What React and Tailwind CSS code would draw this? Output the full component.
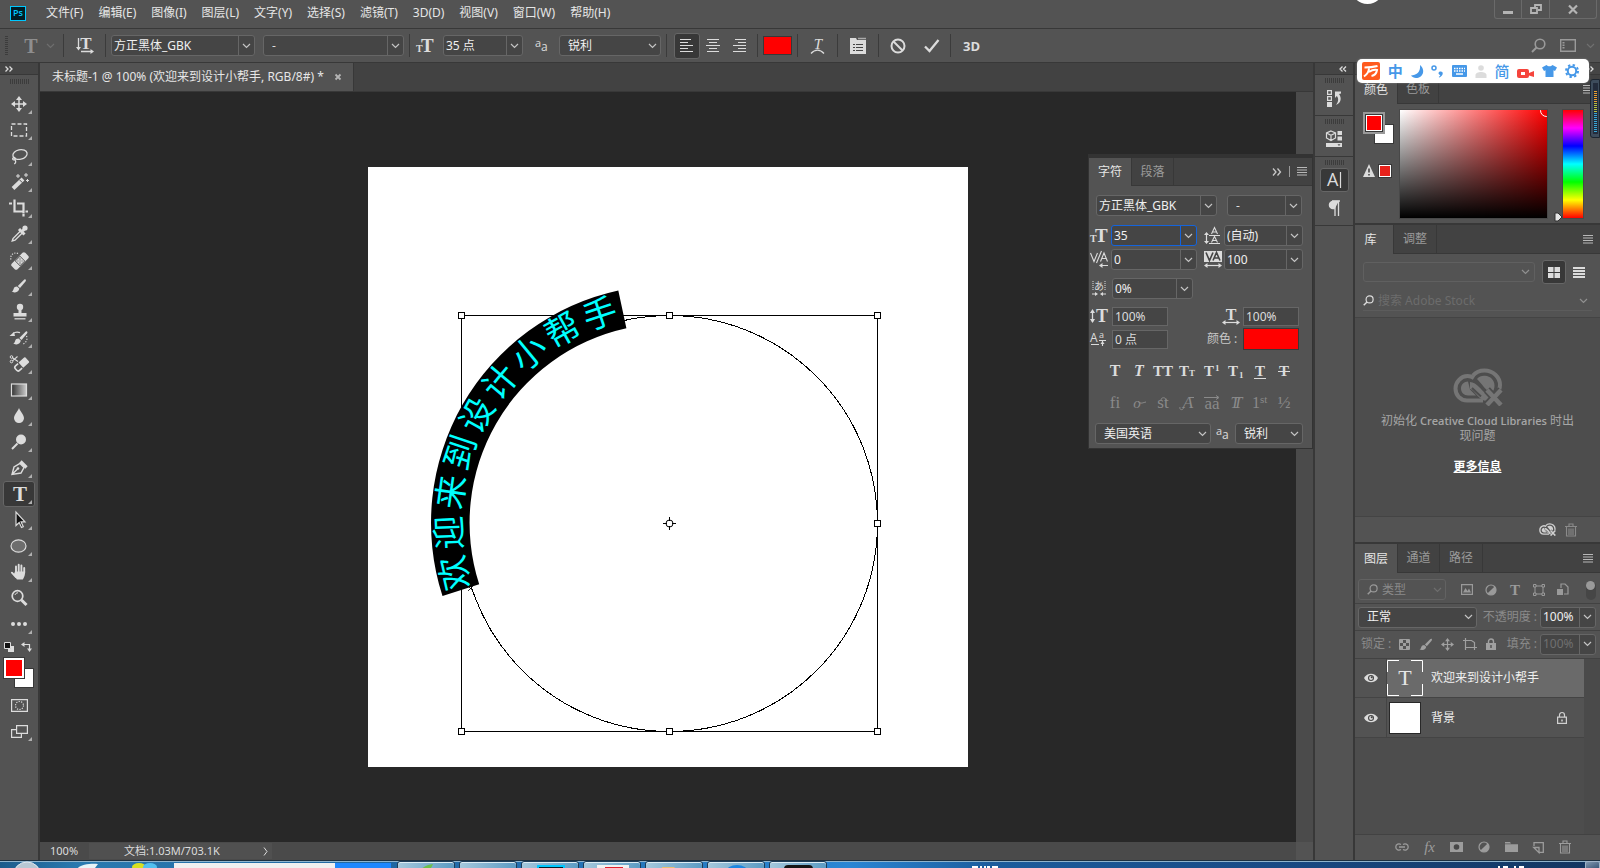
import React from "react";

/* ---------- small helpers ---------- */

const Svg = ({ w = 24, h = 24, className = "", children }) => (
  <svg
    width={w}
    height={h}
    viewBox={`0 0 ${w} ${h}`}
    className={`shrink-0 overflow-visible ${className}`}
    fill="none"
    stroke="currentColor"
    strokeWidth="1.5"
    aria-hidden="true"
  >
    {children}
  </svg>
);

const Chevron = ({ className = "" }) => (
  <Svg w={9} h={6} className={className}>
    <path d="M1 1l3.500 3.500L8 1" strokeWidth="1.200" />
  </Svg>
);

const Glyph = ({ x, y, size, children, italic, weight = 700, anchor = "start", sans }) => (
  <text
    x={x}
    y={y}
    fontSize={size}
    fontWeight={weight}
    fontStyle={italic ? "italic" : "normal"}
    textAnchor={anchor}
    fill="currentColor"
    stroke="none"
    fontFamily={sans ? "'Open Sans', 'Noto Sans', sans-serif" : "'Liberation Serif', serif"}
  >
    {children}
  </text>
);

const Grip = () => (
  <div className="flex h-[5px] justify-center gap-[1px]">
    {Array.from({ length: 10 }, (_, i) => (
      <span key={i} className="w-px bg-[#3c3c3c]" />
    ))}
  </div>
);

const Sep = ({ className = "" }) => <span className={`h-[23px] w-px shrink-0 bg-[#3b3b3b] ${className}`} />;

function Select({ label, value, className = "", textClass = "pl-2", divider, chevron = "text-[#c4c4c4]" }) {
  return (
    <span className={`relative flex h-[21px] shrink-0 rounded-[3px] border border-[#666] bg-[#454545] ${className}`}>
      <select aria-label={label} className={`w-full appearance-none bg-transparent pr-4 leading-4 outline-none ${textClass}`}>
        <option>{value}</option>
      </select>
      <span
        className={`pointer-events-none absolute inset-y-0 right-0 flex w-[16px] items-center justify-center ${divider ? "border-l border-[#666]" : ""}`}
      >
        <Chevron className={chevron} />
      </span>
    </span>
  );
}

function Combo({ label, value, className = "", border = "border-[#666]", text = "text-[#f0f0f0]" }) {
  return (
    <span className={`flex h-[21px] shrink-0 rounded-[3px] border bg-[#454545] ${border} ${className}`}>
      <input aria-label={label} defaultValue={value} className={`w-0 grow bg-transparent pl-[2px] leading-4 outline-none ${text}`} />
      <button type="button" aria-label={`${label} ▾`} className={`flex w-[16px] items-center justify-center border-l text-[#c4c4c4] ${border}`}>
        <Chevron />
      </button>
    </span>
  );
}

const Plain = ({ label, value }) => (
  <input aria-label={label} defaultValue={value} className="h-[19px] w-[56px] border border-[#666] bg-[#454545] pl-[2px] leading-4 outline-none" />
);

const Burger = () => (
  <button type="button" aria-label="面板菜单" className="text-[#b8b8b8]">
    <Svg w={10} h={9}>
      <path d="M0 .5h10M0 3h10M0 5.500h10M0 8h10" strokeWidth="1" />
    </Svg>
  </button>
);

/* ---------- icons ---------- */

const IconAA = () => (
  <Svg w={14} h={14}>
    <Glyph x="0" y="8" size="11" weight="400" sans>a</Glyph>
    <Glyph x="6" y="12" size="12" weight="400" sans>a</Glyph>
  </Svg>
);

const IconSize = () => (
  <Svg w={18} h={16}>
    <Glyph x="0" y="14" size="10">T</Glyph>
    <Glyph x="5" y="14" size="19">T</Glyph>
  </Svg>
);

const IconSearch = ({ s = 15 }) => (
  <svg width={s} height={s} viewBox="0 0 15 15" fill="none" stroke="currentColor" strokeWidth="1.600" className="shrink-0" aria-hidden="true">
    <circle cx="9" cy="6" r="4.800" />
    <path d="M5.500 9.500L1 14" strokeWidth="2" />
  </svg>
);

const IconCC = ({ w, h, hole }) => (
  <svg width={w} height={h} viewBox="0 0 50 38" fill="none" stroke="currentColor" className="shrink-0" aria-hidden="true">
    <path d="M30 32.500H14C7 32.500 2.500 27 2.500 20.500S8 8 14.500 8c2.500 0 4.500.6 6.500 2" strokeWidth="4" />
    <path d="M20 7.500C22.500 4.500 27 2.500 31.500 2.500 40 2.500 47 9 47 17c0 2-.5 3.500-1 5" strokeWidth="4" />
    <path d="M17 17.500c5 0 6.500 5 13 10.500 2 1.500 4.500 2 7 1" strokeWidth="7" />
    <path d="M15 13.500c-4 0-7 3.200-7 7s3 7 7 7h8l-6-6z" fill="currentColor" stroke="none" />
    <path d="M24 11c2-2.500 5-3.500 8-3.200 5.500.3 9.500 4.500 9.500 9.700 0 3-1 5.500-3 7.500C33 23 29 16 24 11z" fill="currentColor" stroke="none" />
    <path d="M19 20l9 8.500" stroke={hole} strokeWidth="2" />
    <path d="M34 22l14 15M48 22L34 37" stroke={hole} strokeWidth="8" />
    <path d="M34 22l14 15M48 22L34 37" strokeWidth="4.500" />
  </svg>
);

const IconTrash = () => (
  <Svg w={12} h={14}>
    <path d="M0 3.500h12M4 3V1h4v2M1.500 4v9h9V4M4 5.500V12M6 5.500V12M8 5.500V12" strokeWidth="1.100" />
  </Svg>
);

const Eye = () => (
  <Svg w={14} h={10}>
    <path d="M0 5C3-.8 11-.8 14 5c-3 5.800-11 5.800-14 0z" fill="currentColor" stroke="none" />
    <circle cx="7" cy="5" r="3" fill="#444" stroke="none" />
    <circle cx="7" cy="5" r="1.900" fill="#ddd" stroke="none" />
    <circle cx="7.700" cy="4.300" r="1" fill="#444" stroke="none" />
  </Svg>
);

const IconHalf = () => (
  <Svg w={12} h={12}>
    <circle cx="6" cy="6" r="5" strokeWidth="1.200" />
    <path d="M9.600 2.400A5 5 0 0 1 2.400 9.600z" fill="currentColor" stroke="none" />
  </Svg>
);

const brushHead = "M18.500 5.500c.8.6.4 1.500 0 2.100L13 14l-2.200-2 6-6c.5-.5 1.100-.9 1.700-.5z";
const brushTip = "M10 12.600l2.300 2c-.2 2.200-2 3.700-4.300 3.800-1.300.1-2.600-.2-3.400-.8 1.500-.5 1.600-1.500 2-2.700.5-1.500 1.700-2.300 3.400-2.300z";
const arrowHeads = "M12 4l3 4H9zM12 20l3-4H9zM4 12l4-3v6zM20 12l-4-3v6z";

const toolIcons = {
  移动工具: (
    <>
      <path d="M12 7v10M7 12h10" />
      <path d={arrowHeads} fill="currentColor" stroke="none" />
    </>
  ),
  矩形选框工具: <rect x="4.500" y="6" width="15" height="12" strokeDasharray="4 2" strokeWidth="1.300" />,
  套索工具: (
    <>
      <ellipse cx="13" cy="10.500" rx="7.200" ry="4.800" transform="rotate(-12 13 10.500)" strokeWidth="1.300" />
      <path d="M7.500 13.500c-2 0-2.500 2 -.8 2.300 1.800.2 2.200-1.500.8-2.300zm.5 2.500c1.200 1.200.8 3-.7 4" strokeWidth="1.300" />
    </>
  ),
  魔棒工具: (
    <>
      <path d="M6 18.500L16 9" strokeWidth="4" />
      <path d="M12.500 9.800l3 3" stroke="#535353" strokeWidth="1" />
      <path d="M11 4v4M9 6h4M19 3v4M17 5h4M20.500 9v3M19 10.500h3" strokeWidth="1" />
    </>
  ),
  裁剪工具: <path d="M2 7.500h3M7.500 3.500v12h9M10 7.500h6.500v10M18.500 15.500H21M16.500 18v2.500" strokeWidth="2.200" />,
  吸管工具: (
    <>
      <path d="M14 8.500l-8 8-.8 2.500L8 18.200l8-8" strokeWidth="1.400" />
      <path d="M12 7l5.500 5.500M15 9.500l2.800-2.800" strokeWidth="3" />
      <circle cx="18" cy="6" r="2.600" fill="currentColor" stroke="none" />
    </>
  ),
  污点修复画笔工具: (
    <>
      <rect x="3.500" y="9" width="19" height="8" rx="2" transform="rotate(-45 13 13)" fill="currentColor" stroke="none" />
      <rect x="9.500" y="9.500" width="7" height="7" transform="rotate(-45 13 13)" fill="#535353" stroke="#535353" strokeWidth=".5" />
      <rect x="10" y="10" width="6" height="6" transform="rotate(-45 13 13)" fill="currentColor" stroke="none" />
      <path d="M13 10.500v.9M13 14.600v.9M10.500 13h.9M14.600 13h.9M12.600 13h.9" stroke="#444" strokeWidth="1.200" />
      <path d="M4 11.500c-1.500-4 3-8 7-6" strokeDasharray="1.200 1.400" strokeWidth="1.200" />
    </>
  ),
  画笔工具: (
    <>
      <path d={brushHead} fill="currentColor" stroke="none" />
      <path d={brushTip} fill="currentColor" stroke="none" />
    </>
  ),
  仿制图章工具: (
    <>
      <circle cx="13" cy="7" r="3.200" fill="currentColor" stroke="none" />
      <path d="M11.500 9h3v4h5v3.500h-13V13h5z" fill="currentColor" stroke="none" />
      <path d="M7.500 18.800h11" strokeWidth="1.300" />
    </>
  ),
  历史记录画笔工具: (
    <>
      <g transform="translate(1.500 0)">
        <path d={brushHead} fill="currentColor" stroke="none" />
        <path d={brushTip} fill="currentColor" stroke="none" />
      </g>
      <path d="M2.500 10l4.500-4 1 4z" fill="currentColor" stroke="none" />
      <path d="M6 7.500c2.500-1.800 4.500-1.800 7-.8" strokeWidth="1.300" />
      <path d="M19.500 10c1.500 4-1 7.500-4.500 8.500" strokeDasharray="1.200 1.500" strokeWidth="1.200" />
    </>
  ),
  橡皮擦工具: (
    <>
      <g transform="rotate(-42 13.500 13.500)">
        <path d="M14 10h7.500a1 1 0 0 1 1 1v5a1 1 0 0 1-1 1H14z" fill="currentColor" stroke="none" />
        <path d="M13 10.500H9.500a2 2 0 0 0-2 2v2a2 2 0 0 0 2 2H13" strokeWidth="1.600" />
      </g>
      <circle cx="4.500" cy="5" r="1.300" strokeWidth="1" />
      <circle cx="4.500" cy="9.500" r="1.300" strokeWidth="1" />
      <path d="M5.500 5.700L11 9.500M5.500 8.800L10.500 4.500" strokeWidth="1.100" />
    </>
  ),
  渐变工具: (
    <>
      <defs>
        <linearGradient id="toolGrad">
          <stop offset="0" stopColor="#333" />
          <stop offset="1" stopColor="#ccc" />
        </linearGradient>
      </defs>
      <rect x="4.500" y="6" width="15" height="12" fill="url(#toolGrad)" strokeWidth="1.200" />
    </>
  ),
  模糊工具: <path d="M12 4c1.500 4 5 6.500 5 10.300A4.900 4.900 0 0 1 12 19a4.900 4.900 0 0 1-5-4.700C7 10.500 10.500 8 12 4z" fill="currentColor" stroke="none" />,
  减淡工具: (
    <>
      <circle cx="14" cy="9.500" r="5" fill="currentColor" stroke="none" />
      <path d="M10.500 13.500L5 19" strokeWidth="2" />
    </>
  ),
  钢笔工具: (
    <>
      <path d="M5 18.500L7 11l6-3.500 4 4-3 5.500zM5.500 18l5-5" strokeWidth="1.400" />
      <circle cx="11" cy="12.500" r="1.300" fill="currentColor" stroke="none" />
      <path d="M13.500 5.500l6 6" strokeWidth="3.200" />
    </>
  ),
  横排文字工具: <Glyph x="13" y="19" size="21" anchor="middle">T</Glyph>,
  路径选择工具: <path d="M9 4v13.500l3.200-3 2.300 5 1.800-.8-2.200-4.800H18z" fill="#111" strokeWidth="1.200" />,
  椭圆工具: <ellipse cx="11.500" cy="12" rx="7.500" ry="6.200" fill="#6e6e6e" strokeWidth="1.200" />,
  抓手工具: (
    <>
      <path d="M9 13V6.500M11.700 12V4.800M14.400 12V5.500M17.200 13V8M9 17L4.900 12.700" strokeWidth="1.900" strokeLinecap="round" />
      <path d="M8 11.500h10.100c0 3.500-.8 5.500-2.300 8H10L6.500 15z" fill="currentColor" stroke="none" />
    </>
  ),
  缩放工具: (
    <>
      <circle cx="10.500" cy="10" r="5.300" strokeWidth="1.700" />
      <path d="M8 9c.5-1.500 1.500-2.200 3-2.200" strokeWidth="1" />
      <path d="M14.500 14l5 5" strokeWidth="3" />
    </>
  ),
  编辑工具栏: <path d="M6 12h.01M12 12h.01M18 12h.01" strokeWidth="4" strokeLinecap="round" />,
};

/* ---------- top bars ---------- */

const menus = ["文件(F)", "编辑(E)", "图像(I)", "图层(L)", "文字(Y)", "选择(S)", "滤镜(T)", "3D(D)", "视图(V)", "窗口(W)", "帮助(H)"];

function MenuBar() {
  return (
    <header className="relative flex h-[29px] shrink-0 items-start justify-between border-b border-[#383838]">
      <div className="flex h-[26px] items-center pl-[10px]">
        <span className="mr-[13px] flex h-[15px] w-4 items-center justify-center border border-[#00c8ff] bg-[#001d26] font-['Open_Sans',sans-serif] text-[9px] font-semibold text-[#00c8ff]">
          Ps
        </span>
        <nav className="flex gap-px">
          {menus.map((m) => (
            <button key={m} type="button" className="px-[7px] leading-4 whitespace-nowrap">
              {m}
            </button>
          ))}
        </nav>
      </div>
      <div className="absolute -top-[29px] right-[216px] size-[33px] rounded-full bg-white" />
      <div className="mr-[3px] flex h-[19px] rounded-b-[3px] border-x border-b border-[#6a6a6a] text-[#b4b4b4]">
        <button type="button" aria-label="最小化" className="flex w-[27px] items-center justify-center border-r border-[#6a6a6a]">
          <Svg w={10} h={12}><path d="M0 9.500h10" strokeWidth="3" /></Svg>
        </button>
        <button type="button" aria-label="还原" className="flex w-[28px] items-center justify-center border-r border-[#6a6a6a]">
          <Svg w={12} h={10}>
            <path d="M5 4V1h6v5H8M1 4h6v5H1z" strokeWidth="1.800" />
          </Svg>
        </button>
        <button type="button" aria-label="关闭" className="flex w-[46px] items-center justify-center">
          <Svg w={10} h={9}><path d="M1 .5l8 8M9 .5l-8 8" strokeWidth="2.200" /></Svg>
        </button>
      </div>
    </header>
  );
}

const alignPaths = [
  "M0 1.500h11M0 4.500h8M0 7.500h13M0 10.500h8M0 13.500h13",
  "M1 1.500h12M3 4.500h8M0 7.500h14M3 10.500h8M1 13.500h12",
  "M3 1.500h11M6 4.500h8M1 7.500h13M6 10.500h8M1 13.500h13",
];

function OptionsBar() {
  return (
    <div className="flex h-[34px] shrink-0 items-center border-b border-[#383838] pl-[5px] text-[#dcdcdc]">
      <span className="flex h-[20px] w-[3px] flex-col justify-between">
        {Array.from({ length: 10 }, (_, i) => (
          <span key={i} className="h-px bg-[#3c3c3c]" />
        ))}
      </span>
      <button type="button" aria-label="工具预设" className="ml-4 flex items-center gap-2 text-[#8e8e8e]">
        <Svg w={14} h={16}><Glyph x="7" y="15" size="20" anchor="middle">T</Glyph></Svg>
        <Chevron className="text-[#6e6e6e]" />
      </button>
      <Sep className="ml-2" />
      <button type="button" aria-label="切换文本取向" className="ml-[12px]">
        <Svg w={18} h={17}>
          <Glyph x="10" y="12" size="17" anchor="middle">T</Glyph>
          <path d="M2.500 1v10M5 14.500h11" strokeWidth="1.300" />
          <path d="M0 10l2.500 3.500L5 10zM14.500 12l3.500 2.500-3.500 2.500z" fill="currentColor" stroke="none" />
        </Svg>
      </button>
      <Sep className="ml-[11px]" />
      <Select label="字体系列" value="方正黑体_GBK" divider className="ml-[5px] w-[144px] text-[#f0f0f0]" textClass="pl-[2px]" />
      <Select label="字体样式" value="-" divider className="ml-2 w-[141px]" />
      <Sep className="ml-[5px]" />
      <span className="ml-[6px]"><IconSize /></span>
      <Combo label="字体大小" value="35 点" className="ml-[9px] w-[80px]" />
      <span className="ml-[12px]"><IconAA /></span>
      <Select label="消除锯齿" value="锐利" className="ml-[10px] w-[102px] text-[#f0f0f0]" />
      <Sep className="ml-[5px]" />
      <div className="ml-[7px] flex">
        {["左对齐文本", "居中对齐文本", "右对齐文本"].map((l, i) => (
          <button
            key={l}
            type="button"
            aria-label={l}
            className={`flex h-[26px] w-[26px] items-center justify-center rounded-[3px] border ${i === 0 ? "border-[#666] bg-[#383838]" : "border-transparent"}`}
          >
            <Svg w={14} h={15}><path d={alignPaths[i]} strokeWidth="1" /></Svg>
          </button>
        ))}
      </div>
      <Sep className="ml-[5px]" />
      <button type="button" aria-label="设置文本颜色" className="ml-[5px] h-[19px] w-[29px] border border-[#383838] bg-[#ff0000]" />
      <Sep className="ml-[5px]" />
      <button type="button" aria-label="创建文字变形" className="ml-[12px]">
        <Svg w={15} h={18}>
          <Glyph x="8" y="12" size="15" weight="400" italic anchor="middle">T</Glyph>
          <path d="M1 16.500c4-4.500 9-4.500 13 0" strokeWidth="1.300" />
        </Svg>
      </button>
      <Sep className="ml-[12px]" />
      <button type="button" aria-label="切换字符和段落面板" className="ml-[12px]">
        <Svg w={16} h={16}>
          <path d="M0 0h6l1 2h9v14H0z" fill="currentColor" stroke="none" />
          <path d="M8 .5h8" stroke="#aaa" strokeWidth="1.500" />
          <path d="M3 6.500h2M3 9.500h2M3 12.500h2M6 6.500h7M6 9.500h7M6 12.500h7" stroke="#444" strokeWidth="1.200" />
        </Svg>
      </button>
      <Sep className="ml-[12px]" />
      <button type="button" aria-label="取消" className="ml-[11px]">
        <Svg w={16} h={16}><circle cx="8" cy="8" r="6.500" strokeWidth="2" /><path d="M3.500 3.500l9 9" strokeWidth="2" /></Svg>
      </button>
      <button type="button" aria-label="提交" className="ml-[18px]">
        <Svg w={16} h={14}><path d="M1 7.500L5.500 12 14.500 1" strokeWidth="2.300" /></Svg>
      </button>
      <Sep className="ml-[10px]" />
      <button type="button" className="ml-[12px] font-['Open_Sans',sans-serif] text-[13px] leading-4 font-bold">3D</button>
      <div className="ml-auto flex items-center pr-[5px] text-[#9a9a9a]">
        <button type="button" aria-label="搜索"><IconSearch /></button>
        <button type="button" aria-label="选择工作区" className="ml-[14px] flex items-center gap-[10px]">
          <Svg w={16} h={13}>
            <path d="M.7.7h14.600v11.600H.7z" strokeWidth="1.400" />
            <path d="M3.500 3v7" strokeWidth="2" strokeDasharray="1.500 1" />
          </Svg>
          <Chevron className="text-[#707070]" />
        </button>
      </div>
    </div>
  );
}

/* ---------- tool strip ---------- */

function Toolbar() {
  return (
    <aside className="flex w-[38px] shrink-0 flex-col bg-[#535353] text-[#dcdcdc]">
      <button type="button" aria-label="展开面板" className="flex h-3 items-center border-b border-[#383838] bg-[#454545] pl-[5px]">
        <Svg w={8} h={6}><path d="M.5.5L3 3 .5 5.500M4.500.5L7 3 4.500 5.500" strokeWidth="1.300" /></Svg>
      </button>
      <div className="pt-[4px]"><Grip /></div>
      <div className="flex flex-col items-center pt-[7px]">
        {Object.entries(toolIcons).map(([name, icon]) => {
          const active = name === "横排文字工具";
          const corner = name !== "缩放工具";
          return (
            <button
              key={name}
              type="button"
              aria-label={name}
              className={`relative flex h-[26px] w-[32px] items-center justify-center rounded-[3px] border ${active ? "border-[#666] bg-[#383838]" : "border-transparent"}`}
            >
              <Svg>{icon}</Svg>
              {corner && (
                <svg width="4" height="4" className="absolute right-[2px] bottom-[2px] fill-[#b0b0b0]" aria-hidden="true">
                  <path d="M4 0v4H0z" />
                </svg>
              )}
            </button>
          );
        })}
      </div>
      <div className="flex justify-between pt-[5px] pr-[6px] pl-1">
        <button type="button" aria-label="默认颜色">
          <Svg w={10} h={10}>
            <path d="M4 4h6v6H4z" fill="#ddd" stroke="none" />
            <path d="M.5.5h6v6h-6z" fill="#111" strokeWidth="1" />
          </Svg>
        </button>
        <button type="button" aria-label="切换颜色">
          <Svg w={11} h={10}>
            <path d="M2 2.500h6.500V8" strokeWidth="1.200" />
            <path d="M3.500 0v5L0 2.500zM6 6.500h5L8.500 10z" fill="currentColor" stroke="none" />
          </Svg>
        </button>
      </div>
      <div className="relative mt-[6px] ml-1 h-[30px] w-[30px]">
        <button type="button" aria-label="背景色" className="absolute right-0 bottom-0 size-5 border border-[#383838] bg-white" />
        <button type="button" aria-label="前景色" className="absolute top-0 left-0 size-5 border-2 border-white bg-[#ff0000] outline outline-[#383838]" />
      </div>
      <div className="flex flex-col items-center gap-[13px] pt-[11px]">
        <button type="button" aria-label="快速蒙版">
          <Svg w={17} h={13}>
            <path d="M.6.6h15.800v11.800H.6z" strokeWidth="1.200" />
            <circle cx="8.500" cy="6.500" r="4" strokeDasharray="1.200 1.300" strokeWidth="1.200" />
          </Svg>
        </button>
        <button type="button" aria-label="屏幕模式" className="relative">
          <Svg w={17} h={13}>
            <path d="M5.600.6h10.800v7.800H5.600z" strokeWidth="1.200" />
            <path d="M5 4.600H.6v7.800h9.800V9" strokeWidth="1.200" />
          </Svg>
          <svg width="4" height="4" className="absolute -right-[4px] -bottom-[3px] fill-[#b0b0b0]" aria-hidden="true">
            <path d="M4 0v4H0z" />
          </svg>
        </button>
      </div>
    </aside>
  );
}

/* ---------- document ---------- */

const ringText = "欢迎来到设计小帮手";

const handles = [
  [93, 148], [301, 148], [509, 148], [509, 356], [509, 564], [301, 564], [93, 564],
];

function Artboard() {
  return (
    <svg width="600" height="600" viewBox="0 0 600 600" className="shrink-0 bg-white" role="img" aria-label={ringText}>
      <g fill="none" stroke="#000" strokeWidth="1" shapeRendering="crispEdges">
        <rect x="93.500" y="148.500" width="416" height="416" />
        <circle cx="301.500" cy="356.500" r="208" />
        <path d="M295 356.500h4M304 356.500h4M301.500 350v4M301.500 359v4" />
      </g>
      <circle cx="301.500" cy="356.500" r="3.500" fill="none" stroke="#000" />
      <g transform="translate(301 356)">
        <path d="M-226.500 73.100A238 238 0 0 1-50.700-232.500L-42.600-194.800A199.500 199.500 0 0 0-189.800 61.300z" fill="#000" />
        <g fill="#00ffff" fontSize="34" textAnchor="middle" fontFamily="'Noto Sans CJK SC', sans-serif">
          {[...ringText].map((ch, i) => (
            <text key={i} transform={`rotate(${-103.1 + 10.6 * i})`} y="-208">
              {ch}
            </text>
          ))}
        </g>
      </g>
      <path d="M100 419l5 5M105 419l-5 5" stroke="#000" strokeWidth=".8" />
      <g fill="#fff" stroke="#000" shapeRendering="crispEdges">
        {handles.map(([x, y]) => (
          <rect key={`${x}-${y}`} x={x - 2.5} y={y - 2.5} width="6" height="6" />
        ))}
      </g>
    </svg>
  );
}

/* ---------- character panel ---------- */

const styleButtons = [
  ["仿粗体", <Glyph x="10" y="12" size="16" anchor="middle">T</Glyph>],
  ["仿斜体", <Glyph x="10" y="12" size="16" anchor="middle" italic>T</Glyph>],
  ["全部大写字母", <Glyph x="10" y="12" size="15" anchor="middle">TT</Glyph>],
  ["小型大写字母", <><Glyph x="2" y="12" size="15">T</Glyph><Glyph x="12" y="12" size="9">T</Glyph></>],
  ["上标", <><Glyph x="2" y="12" size="15">T</Glyph><Glyph x="13" y="7" size="9">1</Glyph></>],
  ["下标", <><Glyph x="2" y="12" size="15">T</Glyph><Glyph x="13" y="14" size="9">1</Glyph></>],
  ["下划线", <><Glyph x="10" y="12" size="15" anchor="middle">T</Glyph><path d="M4 14.500h12" strokeWidth="1" /></>],
  ["删除线", <><Glyph x="10" y="12" size="15" anchor="middle">T</Glyph><path d="M4 7.500h12" strokeWidth="1" /></>],
];

const otButtons = [
  ["标准连字", <Glyph x="10" y="13" size="17" anchor="middle" weight="400">fi</Glyph>],
  ["上下文替代字", <><Glyph x="8" y="13" size="15" anchor="middle" italic weight="400">o</Glyph><path d="M9 6.500c3 3 5 1 8 .5" strokeWidth="1" /></>],
  ["自由连字", <><Glyph x="10" y="13" size="17" anchor="middle" weight="400">st</Glyph><path d="M8 5c0-3 5-3 5 0" strokeWidth="1" /></>],
  ["花饰字", <><Glyph x="11" y="13" size="17" anchor="middle" italic weight="400">A</Glyph><path d="M7 12c-1 4-5 3-4 0M12 2.500h5" strokeWidth="1" /></>],
  ["文体替代字", <><Glyph x="10" y="14" size="17" anchor="middle" weight="400">aa</Glyph><path d="M2 2.500h14M14 .5l3 2-3 2" strokeWidth="1" /></>],
  ["标题替代字", <><Glyph x="9" y="13" size="16" anchor="middle" italic weight="400">T</Glyph><Glyph x="12" y="13" size="16" anchor="middle" italic weight="400">T</Glyph></>],
  ["序数字", <><Glyph x="2" y="13" size="16" weight="400">1</Glyph><Glyph x="10" y="8" size="11" weight="400">st</Glyph></>],
  ["分数字", <Glyph x="10" y="13" size="17" anchor="middle" weight="400">½</Glyph>],
];

const IconRow = ({ items, className }) => (
  <div className={`flex justify-between pr-[18px] pl-[16px] ${className}`}>
    {items.map(([name, g]) => (
      <button key={name} type="button" aria-label={name}>
        <Svg w={20} h={17}>{g}</Svg>
      </button>
    ))}
  </div>
);

function CharacterPanel() {
  return (
    <section className="absolute top-[62px] right-0 flex w-[225px] flex-col border border-t-4 border-[#333] bg-[#535353] pb-[4px] text-[#dcdcdc]">
      <div className="flex h-[28px] items-stretch border-b border-[#383838] bg-[#424242]">
        <button type="button" className="-mb-px w-[42px] bg-[#535353] text-[#e6e6e6]">字符</button>
        <button type="button" className="w-[43px] border-x border-[#383838] text-[#9a9a9a]">段落</button>
        <div className="ml-auto flex items-center gap-[7px] pr-[5px] text-[#c8c8c8]">
          <Svg w={10} h={8}><path d="M1 .5L4 4 1 7.500M5.500.5L8.500 4l-3 3.500" strokeWidth="1.300" /></Svg>
          <span className="h-[11px] w-px bg-[#9a9a9a]" />
          <Burger />
        </div>
      </div>
      <div className="flex gap-[10px] pt-[9px] pl-[7px]">
        <Select label="字体系列" value="方正黑体_GBK" divider className="w-[121px] text-[#f0f0f0]" textClass="pl-[2px]" />
        <Select label="字体样式" value="-" divider className="w-[75px]" />
      </div>
      <div className="mt-[9px] grid grid-cols-[21px_86px_27px_79px] gap-y-[3px] pl-px">
        <span className="self-center"><IconSize /></span>
        <Combo label="字体大小" value="35" border="border-[#1464dc]" />
        <span className="self-center pl-[7px]">
          <Svg w={17} h={17}>
            <path d="M2.500 7v8M5 8.500h11M5 16.500h11" strokeWidth="1.200" />
            <path d="M0 8l2.500-3L5 8zM0 14l2.500 3L5 14z" fill="currentColor" stroke="none" />
            <path d="M7.500 7L10.500.5l3 6.500M8.500 5h4M7.500 15.500l3-6 3 6M8.500 13.500h4" strokeWidth="1.100" />
          </Svg>
        </span>
        <Combo label="行距" value="(自动)" />
        <span className="self-center">
          <Svg w={18} h={17}>
            <path d="M.5 2L4 10.500 7.500 2M10.500 10.500L14 2l3.500 8.500M11.800 7.500h4.500M11.500 0L6.500 12M10 14.500h8" strokeWidth="1.100" />
            <path d="M12.500 12v5L9 14.500z" fill="currentColor" stroke="none" />
          </Svg>
        </span>
        <Combo label="字距微调" value="0" />
        <span className="self-center pl-[7px]">
          <Svg w={18} h={17}>
            <path d="M0 0h18v11H0z" fill="currentColor" stroke="none" />
            <path d="M2 1.500L5.500 9.500 9 1.500M9 9.500l3.500-8 3.500 8M10.200 7h4.600" stroke="#444" strokeWidth="1.600" />
            <path d="M2 14.500h14" strokeWidth="1.200" />
            <path d="M3.500 12v5L0 14.500zM14.500 12v5l3.500-2.500z" fill="currentColor" stroke="none" />
          </Svg>
        </span>
        <Combo label="字距调整" value="100" />
      </div>
      <div className="mt-2 flex items-center gap-[6px] pl-[3px]">
        <Svg w={14} h={15}>
          <path d="M1 0v10M13 0v10" strokeDasharray="1 1" strokeWidth="1" />
          <text x="7" y="9" fontSize="10" textAnchor="middle" fill="currentColor" stroke="none" fontFamily="'Noto Sans CJK JP', sans-serif">あ</text>
          <path d="M0 13h4M10 13h4" strokeWidth="1" />
          <path d="M3 11v4l3-2zM11 11v4l-3-2z" fill="currentColor" stroke="none" />
        </Svg>
        <Combo label="比例间距" value="0%" className="w-[81px]" />
      </div>
      <div className="mt-2 grid grid-cols-[22px_56px_75px_56px] items-center gap-y-[2px] pl-px">
        <Svg w={19} h={15}>
          <path d="M2.500 2v11" strokeWidth="1.300" />
          <path d="M0 4l2.500-4L5 4zM0 10l2.500 4L5 10z" fill="currentColor" stroke="none" />
          <Glyph x="12" y="13" size="18" anchor="middle">T</Glyph>
        </Svg>
        <Plain label="垂直缩放" value="100%" />
        <span className="flex justify-end pr-[3px]">
          <Svg w={18} h={16}>
            <Glyph x="9" y="11" size="16" anchor="middle">T</Glyph>
            <path d="M2 13.500h14" strokeWidth="1.200" />
            <path d="M3.500 11v5L0 13.500zM14.500 11v5l3.500-2.500z" fill="currentColor" stroke="none" />
          </Svg>
        </span>
        <Plain label="水平缩放" value="100%" />
        <Svg w={17} h={15}>
          <Glyph x="0" y="10" size="12" weight="400" sans>A</Glyph>
          <Glyph x="9" y="6" size="9" weight="400" sans>a</Glyph>
          <path d="M1 12.500h8M9 8.500h7M12.500 9v5" strokeWidth="1.100" />
          <path d="M10.500 12l2-3 2 3z" fill="currentColor" stroke="none" />
        </Svg>
        <Plain label="基线偏移" value="0 点" />
        <span className="pl-[39px] leading-4 whitespace-nowrap text-[#c8c8c8]">颜色 :</span>
        <button type="button" aria-label="文本颜色" className="h-[22px] w-[56px] border border-[#383838] bg-[#ff0000]" />
      </div>
      <IconRow items={styleButtons} className="mt-[14px]" />
      <IconRow items={otButtons} className="mt-[14px] text-[#8a8a8a]" />
      <div className="mt-[11px] flex items-center pl-[6px]">
        <Select label="语言" value="美国英语" className="w-[116px] text-[#f0f0f0]" />
        <span className="mx-[5px]"><IconAA /></span>
        <Select label="消除锯齿" value="锐利" className="w-[68px] text-[#f0f0f0]" />
      </div>
    </section>
  );
}

function DocumentArea() {
  return (
    <main className="relative flex min-w-0 grow flex-col bg-[#424242]">
      <div className="flex h-[29px] shrink-0 border-b border-[#383838]">
        <div className="flex items-center gap-[11px] border-r border-[#383838] bg-[#535353] pr-[12px] pl-[12px]">
          <span className="leading-4 whitespace-nowrap">未标题-1 @ 100% (欢迎来到设计小帮手, RGB/8#) *</span>
          <button type="button" aria-label="关闭文档" className="text-[#b4b4b4]">
            <Svg w={6} h={6}><path d="M.5.5l5 5M5.500.5l-5 5" strokeWidth="1.800" /></Svg>
          </button>
        </div>
      </div>
      <div className="relative flex min-h-0 grow">
        <div className="flex grow items-center justify-center overflow-hidden bg-[#282828]">
          <Artboard />
        </div>
        <div className="w-[17px] shrink-0 bg-[#4b4b4b]" />
        <CharacterPanel />
      </div>
      <footer className="flex h-[18px] shrink-0 items-center bg-[#4a4a4a] text-[#dcdcdc]">
        <span className="w-[49px] pl-[10px] text-[11px] leading-4">100%</span>
        <button type="button" className="flex w-[183px] items-center justify-between bg-[#505050] pr-1 pl-[35px] text-[11px] leading-4">
          文档:1.03M/703.1K
          <Svg w={5} h={9}><path d="M1 .5l3 4-3 4" strokeWidth="1" /></Svg>
        </button>
        <span className="ml-auto h-full w-[17px] bg-[#535353]" />
      </footer>
    </main>
  );
}

/* ---------- collapsed dock ---------- */

function Dock() {
  return (
    <aside className="flex w-[38px] shrink-0 flex-col bg-[#535353] text-[#dcdcdc]">
      <div className="flex h-3 items-center justify-end border-b border-[#383838] bg-[#454545] pr-[6px]">
        <Svg w={8} h={6}><path d="M3.500.5L1 3l2.500 2.500M7 .5L4.500 3 7 5.500" strokeWidth="1.300" /></Svg>
      </div>
      <div className="flex h-[41px] flex-col items-center gap-[7px] border-b border-[#383838] pt-[3px]">
        <Grip />
        <button type="button" aria-label="历史记录">
          <Svg w={15} h={17}>
            <path d="M.6.6h3.800v3.800H.6zM.6 6.600h3.800v3.800H.6z" strokeWidth="1.200" />
            <path d="M0 12h5v5H0z" fill="currentColor" stroke="none" />
            <path d="M8 1.500h6v2l-2 .5c3 4 2 9-3 11 3-4 2.500-7 .8-9L8 8z" fill="currentColor" stroke="none" />
          </Svg>
        </button>
      </div>
      <div className="flex h-[41px] flex-col items-center gap-[6px] border-b border-[#383838] pt-[3px]">
        <Grip />
        <button type="button" aria-label="库面板">
          <Svg w={16} h={17}>
            <path d="M5 1l4.500 2v5L5 10.500.5 8V3zM.5 3L5 5.300 9.500 3M5 5.300v5" strokeWidth="1.200" />
            <path d="M11.500 1H16v4h-4.500zM11.500 6.500H16v4h-4.500zM0 13h16v4H0z" fill="currentColor" stroke="none" />
            <path d="M11.500 14.200h3L13 16z" fill="#535353" stroke="none" />
          </Svg>
        </button>
      </div>
      <div className="flex h-[69px] flex-col items-center border-b border-[#383838] pt-[3px]">
        <Grip />
        <button type="button" aria-label="字符面板" className="mt-[3px] flex h-6 w-[29px] items-center justify-center rounded-[3px] border border-[#666] bg-[#383838]">
          <Svg w={15} h={18}>
            <Glyph x="0" y="15" size="18" weight="400" sans>A</Glyph>
            <path d="M13.500 1v16" strokeWidth="1.200" />
          </Svg>
        </button>
        <button type="button" aria-label="段落面板" className="mt-2">
          <Svg w={12} h={16}>
            <path d="M11 .8H5a4.200 4.200 0 0 0 0 8.500h1.500z" fill="currentColor" stroke="none" />
            <path d="M7 1v15M10.500 1v15M4 1h8" strokeWidth="1.300" />
          </Svg>
        </button>
      </div>
    </aside>
  );
}

/* ---------- right panels ---------- */

const Tabs = ({ names, widths, className = "" }) => (
  <div className={`flex h-[29px] shrink-0 border-b border-[#383838] bg-[#424242] ${className}`}>
    {names.map((n, i) => (
      <button
        key={n}
        type="button"
        className={`border-r border-[#383838] leading-4 ${widths[i]} ${i === 0 ? "-mb-px bg-[#535353] text-[#e6e6e6]" : "text-[#9a9a9a]"}`}
      >
        {n}
      </button>
    ))}
    <span className="ml-auto flex items-center pr-[7px]"><Burger /></span>
  </div>
);

function ColorPanel() {
  return (
    <section className="flex h-[148px] shrink-0 flex-col bg-[#535353]">
      <Tabs names={["颜色", "色板"]} widths={["w-[43px]", "w-[41px]"]} />
      <div className="flex pt-[6px] pl-[8px]">
        <div className="w-[36px] pt-[2px]">
          <div className="relative h-8 w-[31px]">
            <button type="button" aria-label="背景色" className="absolute right-0 bottom-0 size-5 border border-[#383838] bg-white" />
            <button type="button" aria-label="前景色" className="absolute top-0 left-0 size-[22px] border-2 border-[#999] bg-[#383838] p-px">
              <span className="block size-4 border border-white bg-[#ff0000]" />
            </button>
          </div>
          <div className="mt-[20px] flex items-center gap-1">
            <Svg w={12} h={13}>
              <path d="M6 0l6 13H0z" fill="#dcdcdc" stroke="none" />
              <path d="M6 4.500v4M6 10v1.500" stroke="#444" strokeWidth="1.600" />
            </Svg>
            <button type="button" aria-label="色域警告" className="size-3 border border-white bg-[#e8221b] outline outline-[#383838]" />
          </div>
        </div>
        <div className="relative ml-px h-[108px] grow overflow-hidden bg-linear-to-r/srgb from-white to-[#ff0000] outline outline-[#484848]">
          <div className="h-full bg-linear-to-b/srgb from-transparent to-black" />
          <span className="absolute -top-[6px] -right-[6px] size-[13px] rounded-full border border-white" />
        </div>
        <div className="flex w-4 items-end justify-end">
          <svg width="9" height="10" viewBox="0 0 9 10" className="translate-y-1" aria-hidden="true">
            <path d="M1 1h3l4 4-4 4H1z" fill="#e6e6e6" stroke="#333" />
          </svg>
        </div>
        <div className="mr-[17px] h-[108px] w-5 bg-[linear-gradient(to_bottom,#f00,#f0f,#00f,#0ff,#0f0,#ff0,#f00)] outline outline-[#484848]" />
      </div>
    </section>
  );
}

function LibraryPanel() {
  return (
    <section className="mt-[2px] flex h-[317px] shrink-0 flex-col bg-[#535353]">
      <Tabs names={["库", "调整"]} widths={["w-[39px] pr-[7px]", "w-[43px]"]} />
      <div className="flex h-[64px] shrink-0 flex-col border-b border-[#444] px-[8px] pt-[6px]">
        <div className="flex items-center pr-[7px] text-[#dcdcdc]">
          <span className="relative flex h-[20px] grow rounded-[3px] border border-[#606060]">
            <select aria-label="选择库" className="w-full appearance-none bg-transparent outline-none" defaultValue="">
              <option value="" />
            </select>
            <Chevron className="pointer-events-none absolute top-[6px] right-1 text-[#909090]" />
          </span>
          <button type="button" aria-label="网格视图" className="ml-[7px] flex size-[24px] items-center justify-center rounded-[3px] border border-[#666] bg-[#383838]">
            <Svg w={12} h={11}><path d="M0 0h5.500v5H0zM6.500 0H12v5H6.500zM0 6h5.500v5H0zM6.500 6H12v5H6.500z" fill="currentColor" stroke="none" /></Svg>
          </button>
          <button type="button" aria-label="列表视图" className="ml-[7px]">
            <Svg w={12} h={11}><path d="M0 1h12M0 4h12M0 7h12M0 10h12" strokeWidth="2" /></Svg>
          </button>
        </div>
        <label className="mt-[7px] flex h-5 items-center border-b border-[#5c5c5c] text-[#dcdcdc]">
          <IconSearch s={11} />
          <input aria-label="搜索 Adobe Stock" placeholder="搜索 Adobe Stock" className="ml-1 w-0 grow bg-transparent text-[12px] leading-4 outline-none placeholder:text-[#6c6c6c]" />
          <Chevron className="mr-1 text-[#909090]" />
        </label>
      </div>
      <div className="flex grow flex-col items-center bg-[#4d4d4d] px-6 pt-[50px] text-center text-[#a6a6a6]">
        <span className="text-[#757575]"><IconCC w={50} h={38} hole="#4d4d4d" /></span>
        <p className="mt-[7px] leading-[15px]">
          初始化 <span className="font-['Open_Sans',sans-serif] text-[11px] font-semibold">Creative Cloud Libraries</span> 时出现问题
        </p>
        <a href="#info" className="mt-4 leading-[15px] font-bold text-white underline">更多信息</a>
      </div>
      <div className="flex h-[26px] shrink-0 items-center justify-end gap-[9px] border-t border-[#444] pr-[23px]">
        <button type="button" aria-label="Creative Cloud" className="text-[#d0d0d0]"><IconCC w={17} h={13} hole="#535353" /></button>
        <button type="button" aria-label="删除" className="text-[#8a8a8a]"><IconTrash /></button>
      </div>
    </section>
  );
}

function LayersPanel() {
  return (
    <section className="mt-[2px] flex min-h-0 grow flex-col bg-[#535353]">
      <Tabs names={["图层", "通道", "路径"]} widths={["w-[43px]", "w-[42px]", "w-[43px]"]} />
      <div className="flex h-[31px] shrink-0 items-end justify-between border-b border-[#424242] pr-1 pb-[3px] pl-[3px] text-[#9a9a9a]">
        <span className="relative flex h-[21px] w-[88px] items-center rounded-[3px] border border-[#626262] pl-[8px]">
          <IconSearch s={11} />
          <select aria-label="图层类型" className="w-full appearance-none bg-transparent pl-[4px] leading-4 text-[#8a8a8a] outline-none">
            <option>类型</option>
          </select>
          <Chevron className="pointer-events-none absolute right-[3px] text-[#6e6e6e]" />
        </span>
        <div className="flex h-[21px] items-center gap-[12px] pr-[2px]">
          <button type="button" aria-label="像素图层">
            <Svg w={12} h={11}><path d="M.6.6h10.800v9.800H.6z" strokeWidth="1.200" /><path d="M2 8.500L4.500 4l2 3L8 4.500l2 4z" fill="currentColor" stroke="none" /></Svg>
          </button>
          <button type="button" aria-label="调整图层"><IconHalf /></button>
          <button type="button" aria-label="文字图层"><Svg w={12} h={12}><Glyph x="6" y="11" size="15" anchor="middle">T</Glyph></Svg></button>
          <button type="button" aria-label="形状图层">
            <Svg w={12} h={12}><path d="M2 2h8v8H2z" strokeWidth="1" /><path d="M.5.5h2.500v2.500H.5zM9 .5h2.500v2.500H9zM.5 9h2.500v2.500H.5zM9 9h2.500v2.500H9z" fill="#535353" strokeWidth="1" /></Svg>
          </button>
          <button type="button" aria-label="智能对象">
            <Svg w={12} h={13}><path d="M4 5V1h4l3 3v7H7" strokeWidth="1.200" /><path d="M0 6h6v6H0z" fill="currentColor" stroke="none" /></Svg>
          </button>
        </div>
        <button type="button" aria-label="打开或关闭图层过滤" className="flex h-[19px] w-[10px] items-start rounded-full bg-[#464646]">
          <span className="size-[9px] rounded-full bg-[#9a9a9a]" />
        </button>
      </div>
      <div className="flex h-[27px] shrink-0 items-center border-b border-[#424242] pr-[4px] pl-[3px]">
        <Select label="混合模式" value="正常" className="w-[119px] text-[#f0f0f0]" />
        <span className="ml-auto leading-4 whitespace-nowrap text-[#8a8a8a]">不透明度 :</span>
        <Combo label="不透明度" value="100%" className="ml-[3px] w-[56px]" />
      </div>
      <div className="flex h-[28px] shrink-0 items-center border-b border-[#424242] pr-[4px] pb-px pl-[6px] text-[#8a8a8a]">
        <span className="leading-4 whitespace-nowrap">锁定 :</span>
        <div className="ml-[8px] flex items-center gap-[9px] text-[#a0a0a0]">
          <button type="button" aria-label="锁定透明像素">
            <Svg w={11} h={11}><path d="M.5.5h10v10H.5z" strokeWidth="1" /><path d="M1 1h3v3H1zM7 1h3v3H7zM4 4h3v3H4zM1 7h3v3H1zM7 7h3v3H7z" fill="currentColor" stroke="none" /></Svg>
          </button>
          <button type="button" aria-label="锁定图像像素">
            <svg width="13" height="13" viewBox="4 5 15 14" fill="currentColor" aria-hidden="true"><path d={brushHead} /><path d={brushTip} /></svg>
          </button>
          <button type="button" aria-label="锁定位置">
            <svg width="13" height="13" viewBox="4 4 16 16" fill="none" stroke="currentColor" strokeWidth="1.500" aria-hidden="true">
              <path d="M12 6v12M6 12h12" />
              <path d={arrowHeads} fill="currentColor" stroke="none" />
            </svg>
          </button>
          <button type="button" aria-label="防止自动嵌套">
            <Svg w={14} h={12}><path d="M0 2.500h2M12 9.500h2M2.500 0v2M2.500 10v2M11.500 10v2M2.500 2.500h6l3 2v5h-9z" strokeWidth="1.200" /></Svg>
          </button>
          <button type="button" aria-label="全部锁定">
            <Svg w={10} h={12}><path d="M2.500 6V3.500a2.500 2.500 0 0 1 5 0V6" strokeWidth="1.400" /><path d="M0 5h10v7H0z" fill="currentColor" stroke="none" /><path d="M5 7v3" stroke="#555" /></Svg>
          </button>
        </div>
        <span className="ml-auto leading-4 whitespace-nowrap">填充 :</span>
        <Combo label="填充" value="100%" text="text-[#707070]" className="ml-[3px] w-[56px]" />
      </div>
      <div className="flex min-h-0 grow bg-[#4a4a4a]">
        <ul className="grow bg-[#4d4d4d] text-[#f0f0f0]">
          <li className="flex h-[39px] items-stretch border-b border-[#444] bg-[#6a6a6a]">
            <button type="button" aria-label="图层可见性" className="flex w-8 items-center justify-center border-r border-[#444] bg-[#535353] text-[#dcdcdc]"><Eye /></button>
            <span className="flex items-center">
              <Svg w={36} h={36} className="text-[#e6e6e6]">
                <path d="M.5 12V.5H12M24 .5h11.500V12M35.500 24v11.500H24M12 35.500H.5V24" stroke="#fff" strokeWidth="1" />
                <Glyph x="18" y="25" size="22" anchor="middle" weight="400">T</Glyph>
              </Svg>
            </span>
            <span className="self-center pl-2 leading-4">欢迎来到设计小帮手</span>
          </li>
          <li className="flex h-[40px] items-stretch border-b border-[#444] bg-[#535353]">
            <button type="button" aria-label="图层可见性" className="flex w-8 items-center justify-center border-r border-[#444] text-[#dcdcdc]"><Eye /></button>
            <span className="ml-[2px] size-8 self-center border border-[#282828] bg-white" />
            <span className="self-center pl-[10px] leading-4">背景</span>
            <span className="mr-[17px] ml-auto self-center text-[#d0d0d0]">
              <Svg w={10} h={12}><path d="M2.500 5V3a2.500 2.500 0 0 1 5 0v2M.6 5.100h8.800v6.300H.6z" strokeWidth="1.200" /><path d="M5 7.500v2" strokeWidth="1.500" /></Svg>
            </span>
          </li>
        </ul>
        <div className="w-[16px] shrink-0" />
      </div>
      <div className="flex h-[26px] shrink-0 items-center justify-end gap-[15px] border-t border-[#424242] pr-[29px] pb-px text-[#9c9c9c]">
        <button type="button" aria-label="链接图层">
          <Svg w={14} h={8}><path d="M6 1.500C4 .3.800 1 .8 4S4 7.700 6 6.500M8 1.500c2-1.200 5.200-.5 5.200 2.500S10 7.700 8 6.500M4 4h6" strokeWidth="1.300" /></Svg>
        </button>
        <button type="button" className="font-['Liberation_Serif',serif] text-[15px] leading-4 italic">fx</button>
        <button type="button" aria-label="添加蒙版">
          <Svg w={13} h={10}><path d="M0 0h13v10H0z" fill="currentColor" stroke="none" /><circle cx="6.500" cy="5" r="2.800" fill="#484848" stroke="none" /></Svg>
        </button>
        <button type="button" aria-label="新建填充或调整图层"><IconHalf /></button>
        <button type="button" aria-label="新建组"><Svg w={13} h={10}><path d="M0 0h5l1 1.500H0zM0 2.200h13V10H0z" fill="currentColor" stroke="none" /></Svg></button>
        <button type="button" aria-label="新建图层"><Svg w={11} h={11}><path d="M1 4V.7h9.300v9.600H6.500M.7 5.500H6v5.200z" strokeWidth="1.300" /></Svg></button>
        <button type="button" aria-label="删除图层"><IconTrash /></button>
      </div>
    </section>
  );
}

function RightPanels() {
  return (
    <aside className="flex w-[245px] shrink-0 flex-col">
      <div className="flex h-3 shrink-0 items-center justify-end border-b border-[#383838] bg-[#454545] pr-[6px] text-[#dcdcdc]">
        <Svg w={8} h={6}><path d="M.5.5L3 3 .5 5.500M4.500.5L7 3 4.500 5.500" strokeWidth="1.300" /></Svg>
      </div>
      <ColorPanel />
      <LibraryPanel />
      <LayersPanel />
    </aside>
  );
}

/* ---------- floating extras ---------- */

function ImeBar() {
  return (
    <div className="absolute top-[59px] right-[11px] flex h-[24px] w-[232px] items-center justify-between rounded-[5px] bg-white pr-[10px] pl-[5px] text-[#4698e8] shadow-[0_0_2px_#888]">
      <Svg w={18} h={18}>
        <rect width="18" height="18" rx="2" fill="#ff5a1e" stroke="none" />
        <path d="M2.500 5.500c5 0 9-.5 13-1.500M7 6c0 3-1.500 6-5 8.500M7 10c3-2 5.500-2.500 8-2-.5 3-2.500 5.500-5.500 6" stroke="#fff" strokeWidth="2" />
      </Svg>
      <button type="button" className="text-[15px] leading-5 font-bold">中</button>
      <Svg w={13} h={13}><path d="M9 0c6 5 3 13-4 13-2 0-4-1-5-2.500C5 10.500 10 7 9 0z" fill="currentColor" stroke="none" /></Svg>
      <Svg w={13} h={13}><circle cx="3" cy="3" r="2" strokeWidth="1.500" /><path d="M9 6.500c3-.8 4.500 3-.5 6l-.8-.6c1-.6 1.500-1.200 1.600-2C7 9.500 7 7 9 6.500z" fill="currentColor" stroke="none" /></Svg>
      <Svg w={15} h={12}>
        <rect width="15" height="12" rx="1" fill="currentColor" stroke="none" />
        <path d="M2 3.500h11M2 6h11" stroke="#fff" strokeDasharray="1.500 1" strokeWidth="1.500" />
        <path d="M4 9h7" stroke="#fff" strokeWidth="1.500" />
      </Svg>
      <Svg w={12} h={13} className="text-[#dcdcdc]"><circle cx="6" cy="3" r="2.800" fill="currentColor" stroke="none" /><path d="M.5 13V10c0-4 11-4 11 0v3z" fill="currentColor" stroke="none" /></Svg>
      <button type="button" className="text-[15px] leading-5 font-medium">简</button>
      <Svg w={17} h={13}>
        <rect y="4" width="12" height="9" rx="2" fill="#f5443c" stroke="none" />
        <path d="M12 8l5-2v6l-5-1.500z" fill="#f5443c" stroke="none" />
        <path d="M4 7h4v3H4z" fill="#fff" stroke="none" />
      </Svg>
      <Svg w={15} h={12}><path d="M4.500 0c1.500 1.800 4.500 1.800 6 0L15 2.500 13 6l-1.500-.8V12h-8V5.200L2 6 0 2.500z" fill="currentColor" stroke="none" /></Svg>
      <Svg w={14} h={14}><circle cx="7" cy="7" r="4.200" strokeWidth="2" /><circle cx="7" cy="7" r="6" strokeDasharray="2.350 2.350" strokeWidth="2" /></Svg>
    </div>
  );
}

const LevelWidget = () => (
  <div className="absolute top-[79px] right-0 flex h-[59px] w-[10px] justify-center rounded-l-[3px] border border-[#1c2530] bg-[#3d4c5c] py-[3px]">
    <div className="flex w-[5px] flex-col items-center justify-end gap-px bg-[#232c3c] pb-[2px]">
      {Array.from({ length: 21 }, (_, i) => (
        <span key={i} className={`h-px w-[3px] ${i < 6 ? "bg-[#e8a030]" : i < 11 ? "bg-[#b8c040]" : "bg-[#38a8d8]"}`} />
      ))}
    </div>
  </div>
);

const tasks = [
  <path d="M22 8c3-5 8-6 13-7-1 3-3 6-6 7z" fill="#6cc04a" />,
  null,
  <><path d="M15 2h28v6H15z" fill="#00c8ff" /><path d="M17 4h24v4H17z" fill="#06202c" /></>,
  <><path d="M13 2h32v6H13z" fill="#f2f2f2" /><path d="M21 4h18v4H21z" fill="#e0202c" /></>,
  <path d="M16 4h12l2 2h12v2H16z" fill="#e8c070" />,
  <ellipse cx="29" cy="9" rx="11" ry="7" fill="#1c86e0" />,
  <rect x="14" y="2" width="29" height="10" rx="4" fill="#151515" />,
];

function Taskbar() {
  return (
    <footer className="flex h-[8px] shrink-0 overflow-hidden border-t border-[#1c3040] bg-[linear-gradient(to_right,#1c5c8c,#2a7ab0_5%,#1f66a0_24%,#2a86d4_53%,#1b5c9c_62%,#184a84_80%,#12355f)] shadow-[inset_0_1px_0_#8fb4cc]">
      <svg width="174" height="7" className="shrink-0" aria-hidden="true">
        <circle cx="27" cy="15" r="14" fill="#b8c8d4" stroke="#e0e8f0" />
        <path d="M78 7c2-4 16-5 20-4l-3 4z" fill="#e8f4f8" />
        <ellipse cx="139" cy="6" rx="7" ry="4" fill="#d8e020" />
        <ellipse cx="150" cy="6" rx="7" ry="4" fill="#50c0f0" />
      </svg>
      <span className="mt-[2px] w-[161px] bg-[#f0f0f0]" />
      <span className="mt-[2px] w-[56px] bg-[#1e88ff]" />
      <div className="flex gap-1 pl-[6px]">
        {tasks.map((t, i) => (
          <button key={i} type="button" aria-label={`任务 ${i + 1}`} className="h-3 w-[58px] rounded-t-[3px] border border-[#1c3c58] bg-linear-to-r from-[#a4c8dc] to-[#5c9cc4] shadow-[inset_0_1px_0_#dcecf4]">
            <svg width="56" height="8" aria-hidden="true">{t}</svg>
          </button>
        ))}
      </div>
      <svg width="26" height="7" className="ml-[145px] shrink-0" aria-hidden="true">
        <path d="M0 6h6M8 6h2M12 6h2M15 6h3M20 6h6" stroke="#fff" strokeWidth="2" />
      </svg>
      <svg width="28" height="7" className="mr-[60px] ml-auto shrink-0" aria-hidden="true">
        <path d="M1 6h2M6 6h5M17 6h2M22 6h5" stroke="#fff" strokeWidth="2" />
      </svg>
      <span className="h-2 w-[15px] rounded-t-[2px] border border-[#a0b4c8] bg-linear-to-br from-[#8098b0] to-[#3c5878]" />
    </footer>
  );
}

export default function App() {
  return (
    <div className="relative flex h-screen min-h-[760px] flex-col overflow-hidden bg-[#535353] font-['Noto_Sans','Noto_Sans_CJK_SC',sans-serif] text-[12px] leading-4 text-[#e6e6e6]">
      <MenuBar />
      <OptionsBar />
      <div className="flex min-h-0 grow gap-[2px] bg-[#383838]">
        <Toolbar />
        <DocumentArea />
        <Dock />
        <RightPanels />
      </div>
      <Taskbar />
      <ImeBar />
      <LevelWidget />
    </div>
  );
}
